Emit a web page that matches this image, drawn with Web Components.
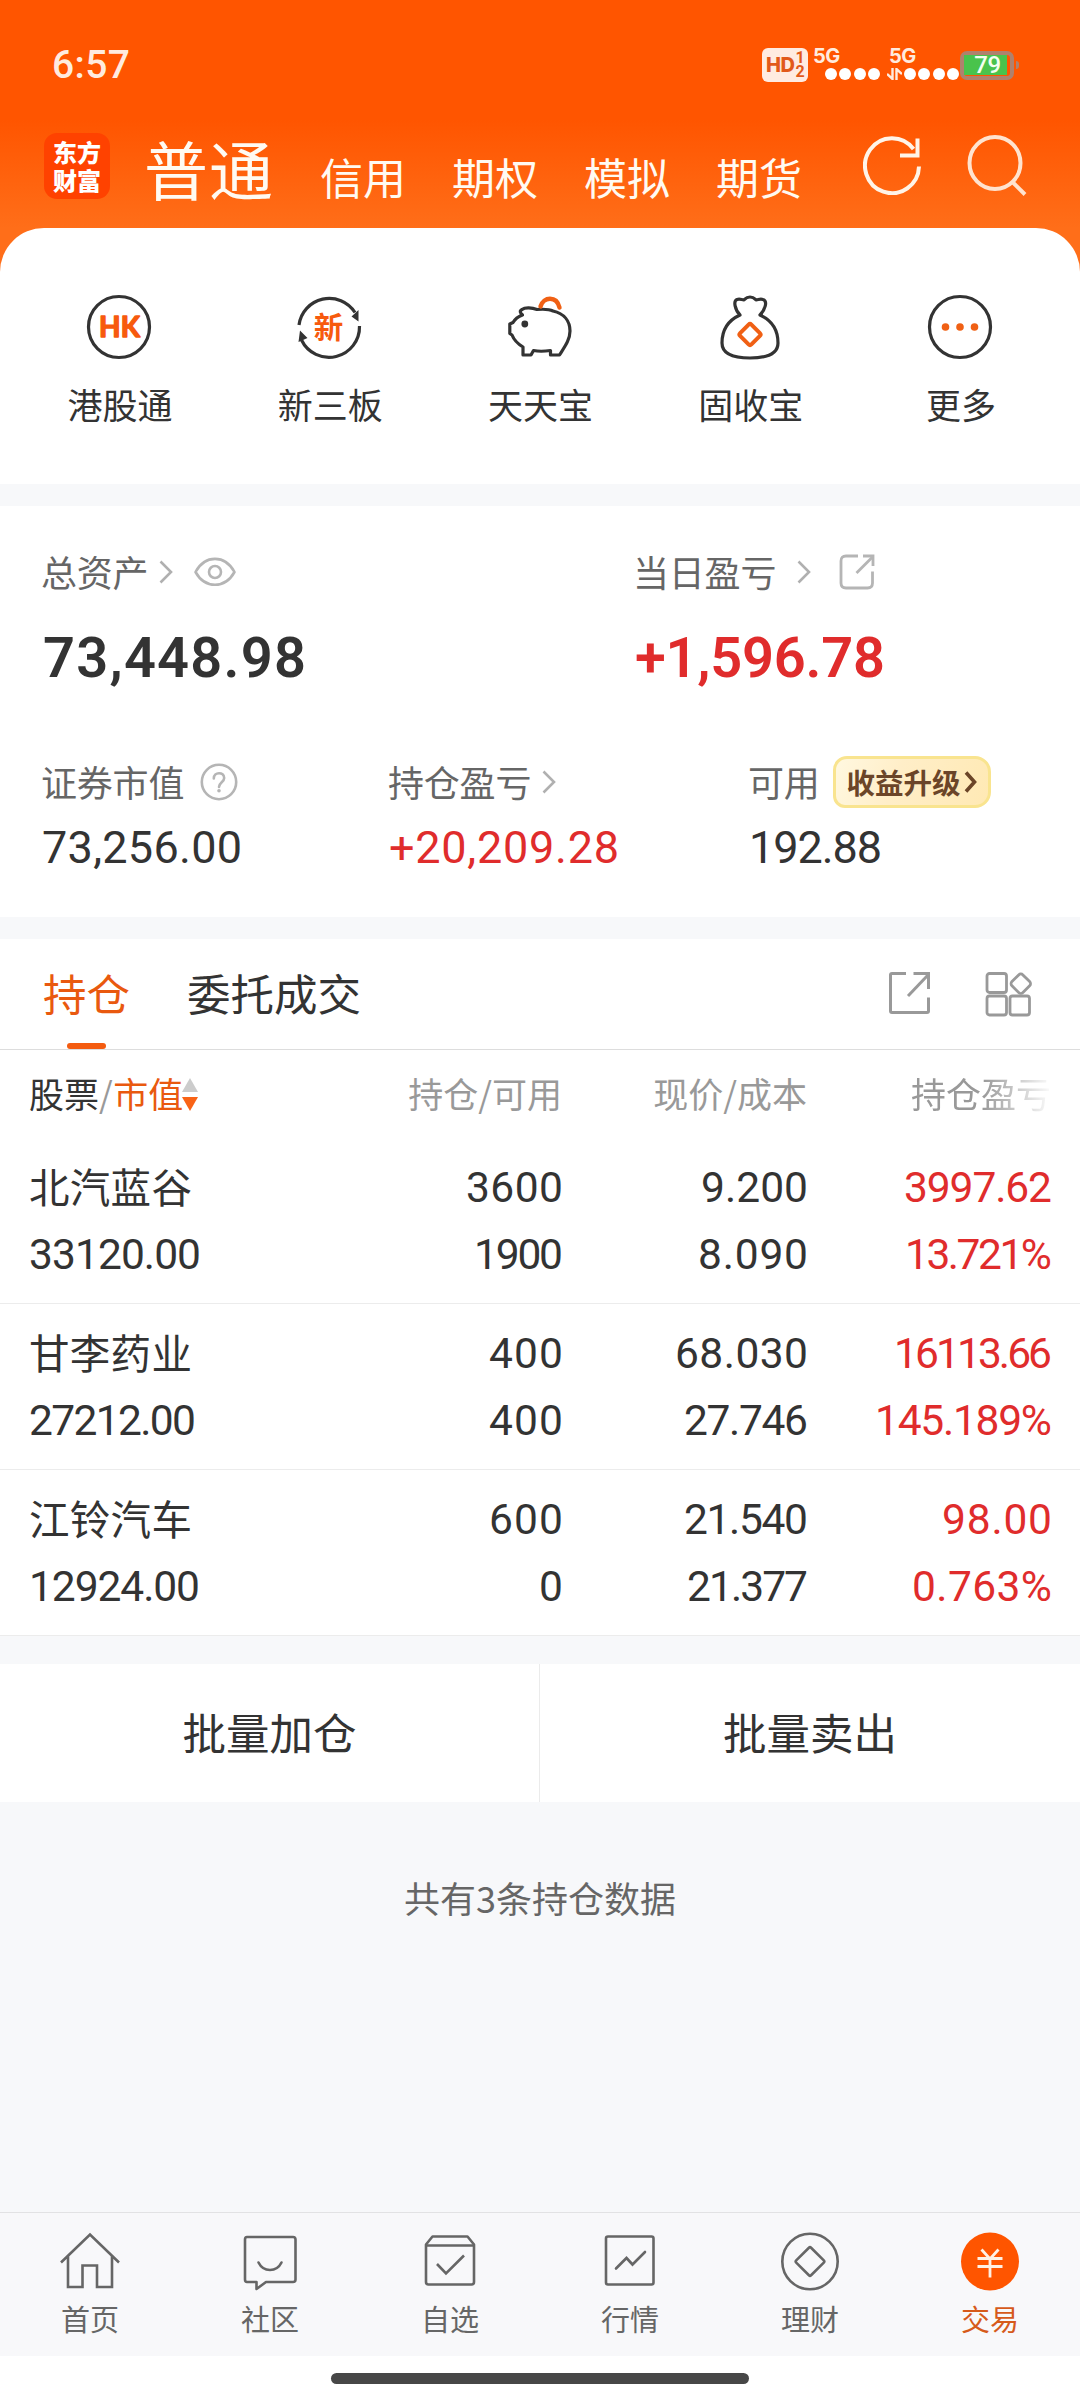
<!DOCTYPE html>
<html lang="zh-CN">
<head>
<meta charset="utf-8">
<title>东方财富</title>
<style>
    html, body { margin: 0; padding: 0; }
    body {
        --orange-text: #e9590f;
        --red: #e02c2c;
        --text: #333;
        --muted: #666;
        --light: #999;
        --page: #f7f8fa;
        width: 1080px;
        height: 2400px;
        overflow: hidden;
        background: #fff;
        color: var(--text);
        font-family: "Noto Sans CJK SC", sans-serif;
    }
</style>
</head>
<body>
<trade-app></trade-app>

<script>
const ICONS = {
    refresh: [58, 60, `<g fill="none" stroke="#fff4e8" stroke-width="4">
        <path d="M56 31.5A27 27.5 0 1 1 50.500 14"/><path d="M54.500 3.500V20.500H37"/></g>`],
    search: [60, 62, `<g fill="none" stroke="#ffe3cf" stroke-width="4">
        <ellipse cx="28" cy="28" rx="25.500" ry="26"/><path d="M45 46.500L58 59.500"/></g>`],
    hk: [68, 68, `<circle cx="34" cy="34" r="30.500" fill="none" stroke="#333" stroke-width="3.200"/>
        <text x="34.500" y="43.800" text-anchor="middle" font-family="Lato, sans-serif" font-weight="700" font-size="28" fill="#f75a0d" stroke="#f75a0d" stroke-width="1.400" stroke-linejoin="round">HK</text>`],
    xin: [68, 68, `<g fill="none" stroke="#333" stroke-width="3.200">
        <path d="M4 32A30.500 30.500 0 0 1 60 19.500"/><path d="M64.500 33A30.500 30.500 0 0 1 6.500 47"/></g>
        <path d="M56.500 23.500L63.500 17V28.500Z M3.500 49L5 37.500L12.500 45Z" fill="#333"/>
        <text x="33.500" y="45" text-anchor="middle" font-weight="700" font-size="29.500" fill="#f75a0d">新</text>`],
    pig: [68, 68, `<g transform="translate(1 0)"><g fill="none" stroke="#333" stroke-width="3.200" stroke-linejoin="round">
        <path d="M16 16.500C19 14 26 14.500 31 16.500C37 16 43 16 47 18C58 20.500 64 28 64 38C64 47 58.500 54 53.500 62H44.500V57.500C38 58.500 32 58.500 27.500 57.500L25 62H17V54C12 51 8 47 6 42L3.800 40.500V31L7 29.500C9 26 11 24 16.500 22C14.500 20 13 18 16 16.500Z"/></g>
        <circle cx="18.800" cy="31" r="3.400" fill="#333"/>
        <path d="M34.500 13.500C37.500 3.500 50.500 2.500 53.500 14.500" fill="none" stroke="#f06014" stroke-width="4.400" stroke-linecap="round"/></g>`],
    bag: [68, 68, `<path d="M24 22C19 17 17 8 21 6.500C24 5.500 26 7 28 6.800C30 5 32 4 34 4C36 4 38 5 40 6.800C42 7 44 5.500 47 6.500C52 8 49 17 44 22C55 27 62 36 62 50C62 61 51 65 34 65C17 65 6 61 6 50C6 36 13 27 24 22Z" fill="none" stroke="#333" stroke-width="3.200" stroke-linejoin="round"/>
        <rect x="26" y="33.500" width="16" height="16" rx="2" transform="rotate(45 34 41.500)" fill="none" stroke="#f06014" stroke-width="4"/>`],
    more: [68, 68, `<circle cx="34" cy="34" r="30.500" fill="none" stroke="#333" stroke-width="3.200"/>
        <g fill="#f06014"><circle cx="19.500" cy="34" r="3.800"/><circle cx="34" cy="34" r="3.800"/><circle cx="48.500" cy="34" r="3.800"/></g>`],
    chevron: [14, 24, `<path d="M1.500 1.500L12 12L1.500 22.500" fill="none" stroke="#b0b0b0" stroke-width="2.600"/>`],
    chevronBold: [13, 22, `<path d="M2 1.500L10.500 11L2 20.500" fill="none" stroke="#6b4528" stroke-width="3.600"/>`],
    eye: [42, 30, `<g fill="none" stroke="#b5b5b5" stroke-width="2.600"><path d="M1.500 15C11 -2.500 31 -2.500 40.500 15C31 32 11 32 1.500 15Z" stroke-linejoin="round"/><circle cx="21" cy="15" r="6"/></g>`],
    help: [38, 38, `<g fill="none" stroke="#b5b5b5" stroke-width="2.600"><circle cx="19" cy="19" r="17.200"/>
        <path d="M13.800 15.500C13.800 8.500 24.200 8.500 24.200 15C24.200 19 19 19.500 19 24" stroke-linecap="round"/></g><circle cx="19" cy="27.800" r="1.800" fill="#b5b5b5"/>`],
    shareRound: [36, 36, `<g fill="none" stroke="#b5b5b5" stroke-width="2.800"><path d="M19 2H7Q2 2 2 7V29Q2 34 7 34H28.500Q33.500 34 33.500 29V17.500"/>
        <path d="M17.500 19L33.500 3"/><path d="M24 2H34V12"/></g>`],
    share: [43, 44, `<g fill="none" stroke="#999" stroke-width="3"><path d="M18 2.500H4Q2.500 2.500 2.500 4V40Q2.500 41.500 4 41.500H39Q40.500 41.500 40.500 40V26.500"/>
        <path d="M20 25L40 4"/><path d="M25.500 2.500H40.500V18"/></g>`],
    grid: [47, 46, `<g fill="none" stroke="#999" stroke-width="2.800"><rect x="2" y="2.500" width="19.500" height="19" rx="2.500"/>
        <rect x="2" y="25" width="19.500" height="19" rx="2.500"/><rect x="25" y="25" width="19.500" height="19" rx="2.500"/>
        <rect x="28" y="5" width="15.500" height="15.500" rx="3" transform="rotate(45 35.800 12.800)"/></g>`],
    sort: [16, 34, `<path d="M8 0L16 14H0Z" fill="#ccc"/><path d="M0 19H16L8 33Z" fill="#f96316"/>`],
    home: [60, 60, `<path d="M1 30.500L30 2.500L59 30.500M8 24.500V55H22.500V33.500H37V55H52V24.500" fill="none" stroke="#666" stroke-width="2.600"/>`],
    community: [60, 60, `<g fill="none" stroke="#666" stroke-width="2.600"><path d="M7 5H53Q55.500 5 55.500 7.500V47.500Q55.500 50 53 50H26L16.500 57V50H7Q5 50 5 47.500V7.500Q5 5 7 5Z" stroke-linejoin="round"/>
        <path d="M18.500 30.500C23.500 40.500 36.500 40.500 41.500 30.500" stroke-linecap="round"/></g>`],
    watch: [60, 60, `<g fill="none" stroke="#666" stroke-width="2.600"><path d="M6 12.500L12.500 4.500H47.500L54 12.500V50Q54 52.500 51.500 52.500H8.500Q6 52.500 6 50V12.500Z" stroke-linejoin="round"/>
        <path d="M6 13.500H54"/><path d="M17 32L26 41.500L44 23.500"/></g>`],
    market: [60, 60, `<g fill="none" stroke="#666" stroke-width="2.600"><rect x="6" y="4.500" width="47.500" height="48" rx="2"/>
        <path d="M16 36.500L26.500 26L32.500 32.500L45 20" stroke-linecap="round"/></g>`],
    wealth: [60, 60, `<g fill="none" stroke="#666" stroke-width="2.600"><circle cx="30" cy="29.500" r="27.700"/>
        <rect x="19.500" y="19" width="21" height="21" rx="1.500" transform="rotate(45 30 29.500)"/></g>`],
    trade: [60, 60, `<circle cx="30" cy="29.500" r="29" fill="#ff5500"/>
        <path d="M21.500 17.500L30 27L38.500 17.500M17.500 26.500H42.500M17.500 34.500H42.500M30 27V45.500" fill="none" stroke="#fff0e4" stroke-width="2.800"/>`],
};

/** Attaches an open shadow root filled with the given styles and markup. */
function render(element, css, html) {
    element.attachShadow({ mode: "open" }).innerHTML = `<style>${css}</style>${html}`;
}

class UiIcon extends HTMLElement {
    connectedCallback() {
        const [w, h, body] = ICONS[this.getAttribute("name")];
        render(this, `
            :host { display: inline-flex; flex: none; }
            svg { display: block; }
        `, `<svg width="${w}" height="${h}" viewBox="0 0 ${w} ${h}">${body}</svg>`);
    }
}

/** A figure whose tracking is tuned so that it takes up `w` pixels. */
class NumText extends HTMLElement {
    connectedCallback() {
        render(this, `
            :host { display: block; flex: none; margin: 0 -2px; font-family: Roboto, sans-serif; white-space: nowrap; }
        `, `<span>${this.getAttribute("value")}</span>`);
        const span = this.shadowRoot.querySelector("span");
        const width = Number(this.getAttribute("w"));
        const count = span.textContent.length;
        if (!width || count < 2) return;
        const spacing = (width + 4 - span.getBoundingClientRect().width) / (count - 1);
        span.style.letterSpacing = `${spacing}px`;
        span.style.marginRight = `${-spacing}px`;
    }
}

class StatusBar extends HTMLElement {
    connectedCallback() {
        render(this, `
            :host { display: flex; align-items: center; height: 130px; box-sizing: border-box; padding: 0 61px 0 54px; color: #ffebdf; }
            .time { margin-right: auto; font-size: 39px; font-weight: 500; line-height: 44px; }
            .hd { display: flex; align-items: center; justify-content: center; gap: 1px; width: 46px; height: 34px; margin-right: 5px;
                border-radius: 6px; background: #ffebe1; color: #e2591a; font: 800 20px/34px Inter, sans-serif; letter-spacing: -.5px; }
            .hd small { display: flex; flex-direction: column; font: 700 16px/14.5px Roboto, sans-serif; }
            .signal { display: flex; flex-direction: column; height: 34px; }
            .signal b { height: 20px; font: 700 20px/16px Inter, sans-serif; letter-spacing: -.5px; }
            .dots { display: flex; align-items: center; gap: 2.500px; }
            .dots i { width: 12px; height: 12px; border-radius: 50%; background: #fff; }
            .one { width: 67px; margin-right: 7px; }
            .one .dots { padding-left: 12px; }
            .two { width: 73px; }
            .two b { padding-left: 2px; }
            .two svg { margin-right: -1px; }
            .battery { display: flex; align-items: center; justify-content: flex-start; box-sizing: border-box; width: 54px; height: 29px;
                border: 4px solid #b0816d; border-radius: 7px; }
            .battery span { width: 43px; height: 20px; background: #49c34c; color: #f3fff0; text-align: center; text-indent: 4px;
                font: 500 24px/21px Roboto, sans-serif; letter-spacing: -.5px; }
            .nub { width: 3px; height: 8px; margin-left: 2px; border-radius: 0 3px 3px 0; background: #b0816d; }
        `, `
            <num-text class="time" value="6:57" w="74"></num-text>
            <div class="hd">HD<small><span>1</span><span>2</span></small></div>
            <div class="signal one"><b>5G</b><div class="dots"><i></i><i></i><i></i><i></i></div></div>
            <div class="signal two"><b>5G</b><div class="dots">
                <svg width="15" height="12" viewBox="0 0 15 12"><path d="M5.500 0V11L0 6M9.500 12V1L15 6" fill="none" stroke="#ffebdf" stroke-width="2.400"/></svg>
                <i></i><i></i><i></i><i></i></div></div>
            <div class="battery"><span>79</span></div><div class="nub"></div>
        `);
    }
}

class AppHeader extends HTMLElement {
    connectedCallback() {
        render(this, `
            :host { display: block; height: 272px; background: linear-gradient(#ff5500 120px, #ff6e19 228px); color: #fffaf2; }
            .row { display: flex; align-items: flex-start; padding: 0 53px 0 44px; }
            .logo { box-sizing: border-box; width: 66px; height: 66px; margin: 3px 34px 0 0; padding: 5px 9px; border-radius: 13px;
                background: #ff4200; color: #fff; font-size: 24px; font-weight: 900; line-height: 28px; word-break: break-all; }
            nav { display: flex; align-items: baseline; padding-top: 1px; }
            nav span { margin-left: 46px; font-size: 43px; line-height: 72px; }
            nav .on { margin: 0; font-size: 64px; letter-spacing: 1px; }
            .refresh { margin: 5px 0 0 auto; }
            .search { margin: 5px 0 0 46px; }
        `, `
            <status-bar></status-bar>
            <div class="row">
                <div class="logo">东方财富</div>
                <nav><span class="on">普通</span><span>信用</span><span>期权</span><span>模拟</span><span>期货</span></nav>
                <ui-icon class="refresh" name="refresh"></ui-icon>
                <ui-icon class="search" name="search"></ui-icon>
            </div>
        `);
    }
}

class QuickEntry extends HTMLElement {
    connectedCallback() {
        render(this, `
            :host { display: flex; flex-direction: column; align-items: center; gap: 18px; }
            .label { padding-left: 2px; font-size: 35px; line-height: 50px; }
        `, `<ui-icon name="${this.getAttribute("icon")}"></ui-icon><span class="label"><slot></slot></span>`);
    }
}

class QuickPanel extends HTMLElement {
    connectedCallback() {
        render(this, `
            :host { display: grid; grid-template-columns: repeat(5, 1fr); box-sizing: border-box; height: 256px; margin-top: -44px;
                padding: 65px 15px 0 14px; border-radius: 44px 44px 0 0; background: #fff; }
        `, `
            <quick-entry icon="hk">港股通</quick-entry>
            <quick-entry icon="xin">新三板</quick-entry>
            <quick-entry icon="pig">天天宝</quick-entry>
            <quick-entry icon="bag">固收宝</quick-entry>
            <quick-entry icon="more">更多</quick-entry>
        `);
    }
}

/** Label row (slot) above a figure. */
class AssetItem extends HTMLElement {
    connectedCallback() {
        render(this, `
            :host { display: flex; flex-direction: column; color: var(--text); }
            :host([up]) { color: var(--red); }
            .label { display: flex; align-items: center; height: 52px; font-size: 36px; line-height: 52px; letter-spacing: -.2px; color: var(--muted); }
            .text { height: 54px; }
            .num { display: flex; padding-left: 3px; margin-top: 15px; line-height: 50px; font-size: 45px; }
            :host([big]) .num { margin-top: 35px; padding-left: 4px; font-size: 56px; font-weight: 600; }
        `, `
            <div class="label"><span class="text">${this.getAttribute("label")}</span><slot></slot></div>
            <div class="num"><num-text value="${this.getAttribute("value")}" w="${this.getAttribute("w")}"></num-text></div>
        `);
    }
}

class AssetPanel extends HTMLElement {
    connectedCallback() {
        render(this, `
            :host { display: block; box-sizing: border-box; height: 411px; padding: 40px 0 0 41px; background: #fff; }
            .top { display: grid; grid-template-columns: 592px 1fr; height: 210px; }
            .bottom { display: grid; grid-template-columns: 347px 360px 1fr; }
            .badge { display: flex; align-items: center; gap: 3px; box-sizing: border-box; width: 158px; height: 52px; margin-left: 13px; padding-left: 11px;
                border: 3px solid #f9e48f; border-radius: 14px 16px 16px 12px; background: linear-gradient(110deg, #fff8e0, #ffeec8 40%, #ffe9b4);
                color: #6b4528; font-size: 28.500px; font-weight: 700; letter-spacing: 0; line-height: 44px; }
        `, `
            <div class="top">
                <asset-item big label="总资产" value="73,448.98" w="259"><ui-icon name="chevron" style="margin-left: 11px"></ui-icon><ui-icon name="eye" style="margin-left: 21px"></ui-icon></asset-item>
                <asset-item big up label="当日盈亏" value="+1,596.78" w="246"><ui-icon name="chevron" style="margin-left: 21px"></ui-icon><ui-icon name="shareRound" style="margin-left: 28px"></ui-icon></asset-item>
            </div>
            <div class="bottom">
                <asset-item label="证券市值" value="73,256.00" w="196"><ui-icon name="help" style="margin-left: 16px"></ui-icon></asset-item>
                <asset-item up label="持仓盈亏" value="+20,209.28" w="226"><ui-icon name="chevron" style="margin-left: 11px"></ui-icon></asset-item>
                <asset-item label="可用" value="192.88" w="129"><div class="badge">收益升级<ui-icon name="chevronBold"></ui-icon></div></asset-item>
            </div>
        `);
    }
}

class HoldingTabs extends HTMLElement {
    connectedCallback() {
        render(this, `
            :host { display: flex; box-sizing: border-box; height: 111px; padding: 0 48px 0 43px; border-bottom: 1px solid #ddd; background: #fff;
                font-size: 43.500px; line-height: 60px; }
            .tab { display: flex; flex-direction: column; align-items: center; justify-content: space-between; box-sizing: border-box; height: 110px; padding-top: 24px; margin-right: 57px; }
            .tab.on { color: var(--orange-text); }
            .tab.on::after { content: ""; width: 39px; height: 6px; border-radius: 3px; background: #f45c10; }
            .tools { display: flex; gap: 54px; margin-left: auto; padding-top: 32px; align-items: flex-start; }
        `, `
            <div class="tab on">持仓</div><div class="tab">委托成交</div>
            <div class="tools"><ui-icon name="share"></ui-icon><ui-icon name="grid"></ui-icon></div>
        `);
    }
}

const COLUMNS = "grid-template-columns: 260px 272px 245px 244px; padding: 0 30px 0 29px;";

class HoldingHead extends HTMLElement {
    connectedCallback() {
        render(this, `
            :host { display: grid; ${COLUMNS} height: 88px; background: #fff; color: var(--light); font-size: 35px; line-height: 85px; }
            span { text-align: right; white-space: nowrap; }
            span + span { margin-right: -1px; }
            .first { display: flex; align-items: flex-start; }
            .first b { font-weight: 400; color: var(--text); }
            .first i { padding: 0 .5px 0 0; font-style: normal; }
            .first em { font-style: normal; color: var(--orange-text); }
            .first ui-icon { margin: 28px 0 0 -1px; }
            .fade { -webkit-mask-image: linear-gradient(90deg, #000 72%, transparent 101%); mask-image: linear-gradient(90deg, #000 72%, transparent 101%); }
        `, `
            <span class="first"><b>股票</b><i>/</i><em>市值</em><ui-icon name="sort"></ui-icon></span>
            <span>持仓/可用</span><span>现价/成本</span><span class="fade">持仓盈亏</span>
        `);
    }
}

class HoldingRow extends HTMLElement {
    connectedCallback() {
        const data = JSON.parse(this.getAttribute("data"));
        const num = ([value, w]) => `<div class="num"><num-text value="${value}" w="${w}"></num-text></div>`;
        render(this, `
            :host { display: grid; ${COLUMNS} height: 166px; box-sizing: border-box; padding-top: 16px; border-bottom: 1px solid #ececec; background: #fff;
                font-size: 42.500px; line-height: 67px; }
            section { display: flex; flex-direction: column; align-items: flex-end; }
            .stock { align-items: flex-start; }
            .gain { color: var(--red); }
            .name { height: 67px; font-size: 40.500px; line-height: 64px; letter-spacing: .3px; white-space: nowrap; }
            .num { display: flex; height: 67px; }
            .stock .num { padding-left: 2px; }
        `, `
            <section class="stock"><div class="name">${data.name}</div>${num(data.value)}</section>
            <section>${data.amount.map(num).join("")}</section>
            <section>${data.price.map(num).join("")}</section>
            <section class="gain">${data.gain.map(num).join("")}</section>
        `);
    }
}

const HOLDINGS = [
    { name: "北汽蓝谷", value: ["33120.00", 168], amount: [["3600", 93], ["1900", 85]], price: [["9.200", 103], ["8.090", 106]], gain: [["3997.62", 144], ["13.721%", 143]] },
    { name: "甘李药业", value: ["27212.00", 163], amount: [["400", 70], ["400", 70]], price: [["68.030", 129], ["27.746", 120]], gain: [["16113.66", 154], ["145.189%", 173]] },
    { name: "江铃汽车", value: ["12924.00", 167], amount: [["600", 70], ["0", 0]], price: [["21.540", 120], ["21.377", 117]], gain: [["98.00", 106], ["0.763%", 136]] },
];

class HoldingList extends HTMLElement {
    connectedCallback() {
        render(this, `:host { display: block; }`, `<holding-head></holding-head>`);
        for (const item of HOLDINGS) {
            const row = document.createElement("holding-row");
            row.setAttribute("data", JSON.stringify(item));
            this.shadowRoot.appendChild(row);
        }
    }
}

class BatchActions extends HTMLElement {
    connectedCallback() {
        render(this, `
            :host { display: grid; grid-template-columns: 539px 1fr; height: 138px; margin-top: 28px; background: #fff; font-size: 43.500px; line-height: 136px; text-align: center; }
            div + div { border-left: 1px solid #ebebeb; }
        `, `<div>批量加仓</div><div>批量卖出</div>`);
    }
}

class BottomNav extends HTMLElement {
    connectedCallback() {
        const items = [["home", "首页"], ["community", "社区"], ["watch", "自选"], ["market", "行情"], ["wealth", "理财"], ["trade", "交易"]];
        render(this, `
            :host { display: grid; grid-template-columns: repeat(6, 1fr); box-sizing: border-box; height: 144px; padding-top: 19px;
                border-top: 1px solid #e2e2e4; background: #f8f8fa; color: var(--muted); }
            div { display: flex; flex-direction: column; align-items: center; gap: 4px; font-size: 29px; line-height: 44px; }
            div:last-child { color: #d65a1b; }
        `, items.map(([icon, label]) => `<div><ui-icon name="${icon}"></ui-icon><span>${label}</span></div>`).join(""));
    }
}

class TradeApp extends HTMLElement {
    connectedCallback() {
        render(this, `
            :host { display: flex; flex-direction: column; width: 1080px; height: 2400px; background: var(--page); }
            asset-panel, holding-tabs { margin-top: 22px; }
            .count { margin-top: 67px; font-size: 36px; line-height: 56px; text-align: center; color: var(--muted); }
            bottom-nav { margin-top: auto; }
            .gesture { display: flex; justify-content: center; box-sizing: border-box; height: 44px; padding-top: 17px; background: #fff; }
            .gesture i { width: 418px; height: 11px; border-radius: 6px; background: #474747; }
        `, `
            <app-header></app-header>
            <quick-panel></quick-panel>
            <asset-panel></asset-panel>
            <holding-tabs></holding-tabs>
            <holding-list></holding-list>
            <batch-actions></batch-actions>
            <div class="count">共有3条持仓数据</div>
            <bottom-nav></bottom-nav>
            <div class="gesture"><i></i></div>
        `);
    }
}

customElements.define("ui-icon", UiIcon);
customElements.define("num-text", NumText);
customElements.define("status-bar", StatusBar);
customElements.define("app-header", AppHeader);
customElements.define("quick-entry", QuickEntry);
customElements.define("quick-panel", QuickPanel);
customElements.define("asset-item", AssetItem);
customElements.define("asset-panel", AssetPanel);
customElements.define("holding-tabs", HoldingTabs);
customElements.define("holding-head", HoldingHead);
customElements.define("holding-row", HoldingRow);
customElements.define("holding-list", HoldingList);
customElements.define("batch-actions", BatchActions);
customElements.define("bottom-nav", BottomNav);
customElements.define("trade-app", TradeApp);
</script>
</body>
</html>
